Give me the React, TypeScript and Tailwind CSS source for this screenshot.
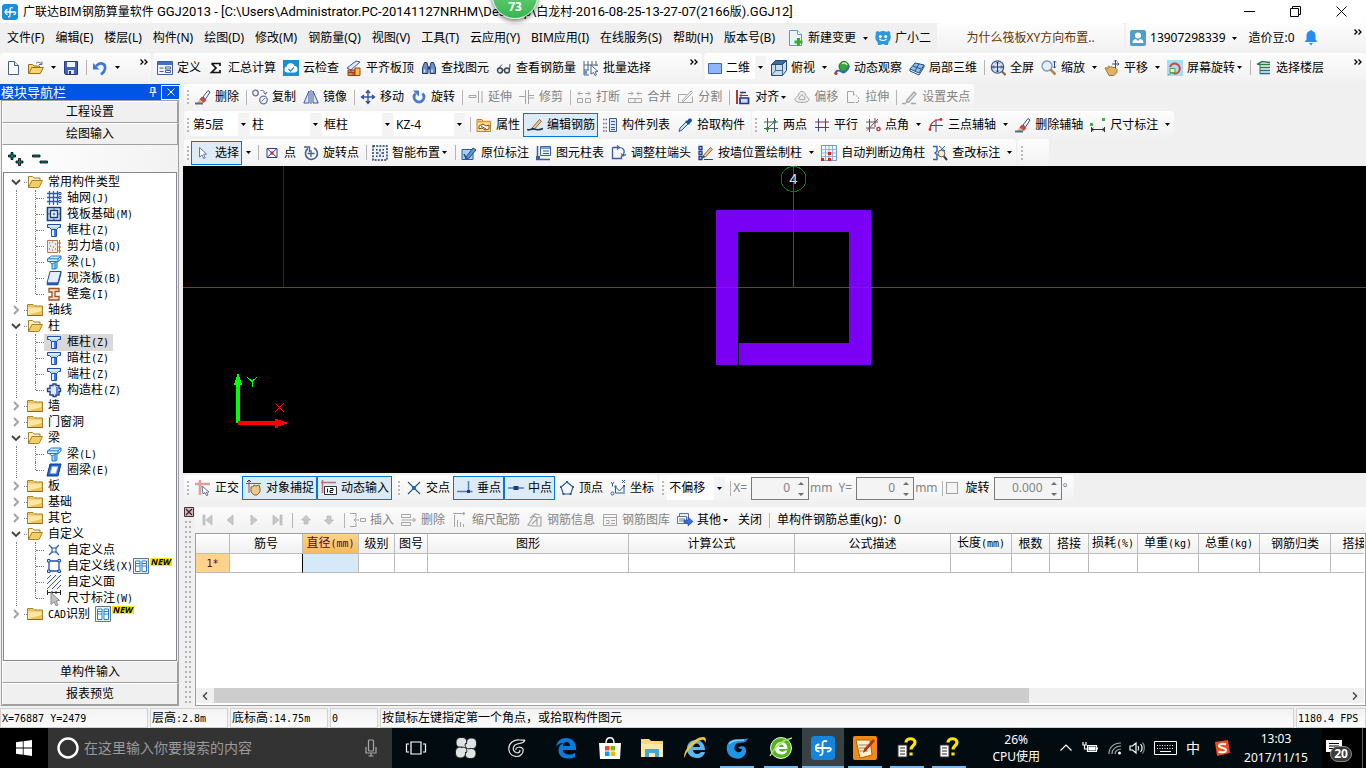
import { Fragment, type ReactNode } from "react";

const UI = "font-['Noto_Sans','Noto_Sans_CJK_SC',sans-serif]";

/* ---------- icons, all on a 16 x 16 grid ---------- */

const pencil = (c = "#8a5a2b") => (
  <>
    <path d="M5 11 12.500 2.500l2 1.800L7.500 12z" fill="#e9c79a" stroke={c} strokeWidth=".9" />
    <path d="m5 11-.8 2.400L7.500 12z" fill="#333" />
  </>
);

const brush = (
  <>
    <path d="M8 8 13 1.500 15 3l-4.500 7z" fill="#fff" stroke="#35507e" />
    <path d="m7 8 4 3-2 2.500L4.800 10.600z" fill="#d9463e" stroke="#8b2e2a" strokeWidth=".6" />
    <path d="M4.600 10.800 8.600 13.600 5 14.500l-3-1z" fill="#e8b96a" />
    <path d="M0 14.500h8" stroke="#4b6a9a" strokeWidth="2" />
  </>
);

const column = (
  <>
    <path d="M1.500 2.500h13v3h-2l-2 2h-5l-2-2h-2z" fill="#bcd6fb" stroke="#1d4fae" />
    <path d="M5.500 7.500h5v7h-5z" fill="#e8f1ff" stroke="#1d4fae" />
    <path d="M9 8v6" stroke="#3c78dd" strokeWidth="2" />
    <path d="M3 4h10" stroke="#fff" />
  </>
);

const beam = (
  <>
    <path d="m1.500 5 4-3h9.500v3l-3 2.500H1.500z" fill="#d5efff" stroke="#1b78c2" />
    <path d="M1.500 4.800h10.500L15 2M12 5v2.500" fill="none" stroke="#1b78c2" />
    <path d="m6 15 0-5 5-2.500V14l-2 1zM3 7.500 6 10" fill="#a9dafb" stroke="#1b78c2" />
    <path d="m9 9v6" stroke="#1b78c2" />
  </>
);

const ICONS: Record<string, ReactNode> = {
  newFile: <><path d="M3.500 1.500h6l4 4v9h-10z" fill="#fff" stroke="#42618f" /><path d="M9.500 1.500v4h4" fill="#d8e4f4" stroke="#42618f" /></>,
  open: <><path d="M.5 13.500v-9h4l1.500 1.500h5.500v2" fill="#f6d584" stroke="#9a6d16" /><path d="m.8 13.500 3-6h11.500l-3 6z" fill="#fbd46f" stroke="#9a6d16" /><path d="M8 3.500c2-2 4-1.500 5.500.5M14 1.500v3h-3" fill="none" stroke="#4a6a99" /></>,
  save: <><path d="M1.500 1.500h13v13h-12l-1-1z" fill="#3f5fc4" stroke="#24388c" /><path d="M4 2h8v5H4z" fill="#f2f5ff" /><path d="M5 10h6v4H5z" fill="#e4e8f6" /><path d="M6 11h2v3H6z" fill="#24388c" /></>,
  undo: <><path d="M4 6c5-5 10-2 9 3-.4 2.500-2 4-4 5.500" fill="none" stroke="#3c76d8" strokeWidth="2.600" /><path d="M1 3v6.500h6.500z" fill="#3c76d8" /></>,
  define: <><path d="M.5 1.500h15v13H.5z" fill="#eef4ff" stroke="#3d5f9e" /><path d="M1 2h14v3H1z" fill="#3f72c9" /><path d="M2.500 8h4M2.500 11.500h4" stroke="#3d5f9e" /><path d="M8.500 7h5v2h-5zM8.500 10.500h5v2h-5z" fill="#fff" stroke="#3d5f9e" /></>,
  sum: <path d="M3.500 3.500h8.500v2.500M3.500 3.500 8 8l-4.500 4.500H12V10" fill="none" stroke="#111" strokeWidth="1.700" />,
  cloud: <><rect width="16" height="16" fill="#1b8fd4" /><path d="M4 12.500a3 3 0 0 1-.3-5.900A4 4 0 0 1 11.500 6a3.300 3.300 0 0 1 .5 6.500z" fill="#fff" /><path d="m5.500 9 2 2 3.500-3.500" fill="none" stroke="#1b8fd4" strokeWidth="1.400" /></>,
  flush: <><path d="m1 8 9-7 4 1-9 8z" fill="#dfe9fb" stroke="#3a5ba0" /><path d="M2 10h7v5.500H2z" fill="#e78a3c" stroke="#9b3f1b" /><path d="M2 12.500h7M5 10v2.500M7 12.500v3" stroke="#9b3f1b" /><path d="M9 8h5v7.500H9z" fill="#f4bd4e" stroke="#9b3f1b" /></>,
  binoc: <><path d="M3.500 2.500h2.500l1 4.500v6.500H1.500V8zM12.500 2.500H10L9 7v6.500h5.500V8z" fill="#6b8fc6" stroke="#1f3a6b" /><path d="M7 6.500h2v3H7z" fill="#1f3a6b" /><path d="M3.500 9.500v3M11 9.500v3" stroke="#dbe8fb" strokeWidth="1.500" /></>,
  glasses: <><circle cx="4" cy="10.500" r="2.500" fill="#dce6f2" stroke="#3c4653" strokeWidth="1.400" /><circle cx="11" cy="10.500" r="2.500" fill="#dce6f2" stroke="#3c4653" strokeWidth="1.400" /><path d="M6.500 10h2M2 9l4-4.500M13.500 10 14 4" fill="none" stroke="#3c4653" /></>,
  batch: <><path d="M1 1v14h5M5 1v9M1 5h14M1 10h5M9 1v4M13 1v5" fill="none" stroke="#51647f" /><path d="M1 11h3v3H1z" fill="#5f8ede" /><path d="m8 5 7 6.500-3 .3 1.500 3-1.500.7-1.500-3L8 14z" fill="#fff" stroke="#51647f" /></>,
  rect: <path d="M1.500 3.500h13v10h-13z" fill="#8fb6fb" stroke="#3c65c0" />,
  cube: <><path d="m.5 4.500 4-4h11v10l-4 5H.5z" fill="#c6dcf0" stroke="#244d76" /><path d="m.5 4.500 4-4h11l-4 4z" fill="#376e9f" stroke="#244d76" /><path d="M11.500 4.500v11M4.500 4.500v6h7M4.500 10.500l-4 5" fill="none" stroke="#244d76" strokeWidth=".8" /></>,
  orbit: <><circle cx="10" cy="6.500" r="5" fill="#36a53f" stroke="#186b2a" /><path d="M8 4c2-2 4-1 5 1" stroke="#d8f5b0" fill="none" strokeWidth="1.500" /><path d="M1 14c1-4 4-4 7-2s5-2 7-6" fill="none" stroke="#2a6fb5" strokeWidth="1.800" /><circle cx="2" cy="13.500" r="1.600" fill="#c5372b" /></>,
  local3d: <><path d="m1 9 5-6 9 2-5 8z" fill="#92bde6" stroke="#1d5485" /><path d="m4 6 8 3M10 3.500 6 11M1 9v2l9 4 5-8V5" fill="none" stroke="#1d5485" /></>,
  full: <><circle cx="7.500" cy="7" r="6.200" fill="#dbe8fa" stroke="#3c5d92" strokeWidth="1.300" /><path d="M7.500 2v10M2.500 7h10M6 3.500 7.500 2 9 3.500M6 10.500 7.500 12 9 10.500M4 5.500 2.500 7 4 8.500M11 5.500 12.500 7 11 8.500" fill="none" stroke="#1c3668" /><path d="m12 11.500 3.500 3.500" stroke="#8b6138" strokeWidth="2" /></>,
  zoom: <><circle cx="6" cy="6" r="5" fill="#e4effc" stroke="#7b93b8" strokeWidth="1.300" /><path d="m9.500 9.500 5 5" stroke="#b0844c" strokeWidth="2.500" /><path d="M13.500 1v7M12 2.500 13.500 1 15 2.500M12 6.500 13.500 8 15 6.500" fill="none" stroke="#264a86" /></>,
  pan: <><path d="M1 8c1-1 2 0 3 1V6.500c1-1 2 0 2 1l1-1 2 1h2l2 2v3L10 15.500H5z" fill="#e0b368" stroke="#a2752f" /><path d="M11.500 0v8M8 4h7M10 1.500 11.500 0 13 1.500M13.500 2.500 15 4l-1.500 1.500" fill="none" stroke="#2d4c86" /></>,
  screenRot: <><rect width="16" height="16" fill="#a8dcf4" /><path d="M3 7a5 5 0 1 1 4 6.500" fill="none" stroke="#dd3f35" strokeWidth="2" /><path d="M3 8.500h5v4H3z" fill="#e9f2c8" stroke="#5f9e48" /><path d="M1 15c2-2 5-2 7-1" fill="none" stroke="#5f9e48" /></>,
  floors: <><path d="m1 4.500 5-3 8 1M3 4.500h11M4 7.500h10" stroke="#2d7d4b" strokeWidth="1.600" fill="none" /><path d="M4 10.500h10M4 13.500h10" stroke="#2b6496" strokeWidth="1.600" /><path d="M4 4v10" fill="none" stroke="#2d7d4b" /></>,
  brush,
  copy: <><circle cx="3.500" cy="4" r="2.800" fill="#eef2f9" stroke="#67789a" strokeWidth="1.300" /><circle cx="11.500" cy="11" r="3.800" fill="#eef2f9" stroke="#67789a" strokeWidth="1.300" /><path d="m9.500 12.500 3.500-3.500" fill="none" stroke="#67789a" /><path d="M8.500 1.500c3-.5 4.500 1 5 3.500M11.500 3.500l2 2 1.500-2.500" fill="none" stroke="#67789a" /></>,
  mirror: <><path d="M6 2v12H.8zM10 2v12h5.200z" fill="#dfe9fb" stroke="#34549a" /><path d="M8 1v14" stroke="#34549a" /></>,
  move: <path d="M8 2.500v11M2.500 8h11M6 4 8 1.500 10 4M6 12l2 2.500 2-2.500M4 6 1.500 8 4 10M12 6l2.500 2L12 10" fill="none" stroke="#34549a" strokeWidth="1.400" />,
  rotate: <><path d="M4.500 4.500a5 5 0 1 0 7 0" fill="none" stroke="#4c79d2" strokeWidth="2.800" /><path d="M2 1.500h6v6z" fill="#4c79d2" /></>,
  extend: <path d="M1 6.500h7v2H1zM10.500 2v12M14 2v12" fill="none" stroke="#a5a5a5" />,
  trim: <path d="M6.500 1v14M9.500 1v14M0 7.500h6M10 6.500h5M10 9h5" fill="none" stroke="#a5a5a5" />,
  split1: <path d="M1.500 9.500h5v4h-5zM9.500 9.500h5v4h-5zM7 4.500H2M4 2.500l-2 2 2 2M9 4.500h5M12 2.500l2 2-2 2" fill="none" stroke="#a5a5a5" />,
  merge: <path d="M1.500 9.500h13v4h-13zM8 9.500v4M1 4.500h5M4 2.500l2 2-2 2M15 4.500h-5M12 2.500l-2 2 2 2" fill="none" stroke="#a5a5a5" />,
  divide: <path d="M.5 5.500h8M.5 5.500v8h14v-6M4 12 13 2l1.500 1.500-9 9z" fill="none" stroke="#a5a5a5" />,
  align: <><path d="M2 1v14" stroke="#a3261d" strokeWidth="1.800" /><path d="M5 3.500h6M5 9h8.500v5.500H5z" fill="#cfdcf5" stroke="#1d3788" strokeWidth="1.700" /><path d="M13 6.500H5M7 4.500l-2 2 2 2" fill="none" stroke="#b3261d" /></>,
  offset: <><path d="M8 2.500c2.500 0 3 2 4 4s3 2 3 4-3 3-7 3-7-1-7-3 2-2 3-4 1.500-4 4-4z" fill="#ececec" stroke="#a5a5a5" /><path d="M8 6c1.500 0 3 3 3 4s-6 1-6 0 1.500-4 3-4z" fill="none" stroke="#a5a5a5" /></>,
  stretch: <><path d="M2.500 2.500h6v4M2.500 2.500v11h6" fill="none" stroke="#a5a5a5" /><path d="m8.500 4.500 5 4v5h-5" fill="none" stroke="#a5a5a5" strokeDasharray="2 1" /></>,
  grip: <path d="M5 11 12 3l2 1.800L7 13l-2.500.5zM0 14.500h4M9 14.500h5" fill="#e4e4e4" stroke="#a5a5a5" strokeWidth="1.300" />,
  props: <><path d="M1 2.500h5l1 2h7.500v10H1z" fill="#fbe1a0" stroke="#c48120" /><path d="M1 4.500h13" stroke="#e79a2c" strokeWidth="1.600" /><path d="M3 9 7 7l3 2 3-1v4l-4 1-3-2-3 1z" fill="#fff" stroke="#7a4a12" /><path d="m5 9 5 3" stroke="#7a4a12" /></>,
  editBar: <>{pencil()}<path d="M0 12.500c3 1.500 4-1.500 7-.5s5 1.500 9-.5" fill="none" stroke="#253247" strokeWidth="1.600" /></>,
  list: <><path d="M1 2.500h4M1 6.500h4M1 10.500h4M1 14h4" stroke="#5d7296" strokeWidth="1.600" strokeDasharray="1.500 1" /><path d="M7.500 1.500h7v13h-7z" fill="#dce7fb" stroke="#3e5c96" /><path d="M9 4.500h4M9 7.500h4M9 10.500h4M9 12.500h4" stroke="#3e5c96" /></>,
  dropper: <><path d="m2 14.500 1-3.500 6-6 2 2-6 6z" fill="#c2e1fb" stroke="#2b5d9e" /><path d="m8 4 4 4 1-2c2-1 2.500-3 1.500-4s-3-.5-4 1.500z" fill="#1b4f9c" /></>,
  twoPt: <><path d="M4.500 1v14M11.500 1v14M1 5h14M1 11.500h14" stroke="#4b5874" /><path d="m3 13 10-10" stroke="#2d8c35" /><circle cx="4.500" cy="11.500" r="1.600" fill="#2d8c35" /><circle cx="11.500" cy="5" r="1.600" fill="#2d8c35" /></>,
  parallel: <><path d="M4.500 1.500v13M11.500 1.500v13" stroke="#3a4a8c" /><path d="M1 5h14M1 10.500h14" stroke="#8c2f3a" /></>,
  angle: <><path d="M4.500 2v13M10 1v9M1 5h12M1 11h9" stroke="#4b5874" /><path d="M2 13.500 13 2" stroke="#c52f2f" /><circle cx="13.500" cy="12" r="1.600" fill="none" stroke="#c52f2f" strokeWidth="1.400" /></>,
  threePt: <><path d="M8 2v13M2 8.500h13" stroke="#3a4a8c" /><path d="M2 12c0-5 3-9 11-9.500" fill="none" stroke="#c52f2f" strokeWidth="1.200" /><circle cx="2" cy="12.500" r="1.400" fill="#c52f2f" /><circle cx="13" cy="2.500" r="1.400" fill="#c52f2f" /></>,
  dim: <><path d="M1.500 10v5M14.500 10v5M1.500 12.500h13M3.500 11l-2 1.500 2 1.500M12.500 11l2 1.500-2 1.500" fill="none" stroke="#333" /><path d="M0 6h3v3H0zM12 1h3v3h-3z" fill="#3fae49" /></>,
  cursor: <path d="m4.500 2.500 7 6.500-3 .2 1.700 3.600-1.500.7L7 10l-2.500 2z" fill="#fff" stroke="#62779c" />,
  point: <><path d="M3 3.500h10v9H3z" fill="#fff" stroke="#2c3f94" /><path d="m3 3.500 10 9M13 3.500l-10 9" stroke="#2c3f94" /><circle cx="8" cy="8" r="1.700" fill="#c52f2f" /></>,
  rotPt: <><path d="M5 3.500a6 6 0 1 0 6-.5" fill="none" stroke="#45618f" strokeWidth="1.600" /><path d="M1 2h5.500v5M8 5v7M4.500 8.500h7" fill="none" stroke="#45618f" strokeWidth="1.300" /></>,
  smart: <><path d="M1 1h14v14H1z" fill="#eef3fc" stroke="#28385c" strokeWidth="1.500" strokeDasharray="2 1.200" /><path d="M8 4v2.500M8 9.500V12M4 8h2.500M9.500 8H12" stroke="#28385c" strokeWidth="1.400" /><path d="M4 4h1.500v1.500H4zM10.500 4H12v1.500h-1.500zM4 10.500h1.500V12H4zM10.500 10.500H12V12h-1.500z" fill="#28385c" /></>,
  origLabel: <><path d="M1 4.500h11v10H1z" fill="#a7cdf3" stroke="#2d5e9c" /><path d="m5 12 7-9 3 2-7 8-3.500 1z" fill="#5b96dc" stroke="#1f4a86" /><path d="m3 9 2 4" stroke="#1f4a86" strokeWidth="1.500" /></>,
  colTable: <><path d="M1.500 1v11M0 14.500h14" stroke="#3d5f9e" strokeWidth="1.500" /><path d="M4.500 1.500h10v9h-10z" fill="#eef4ff" stroke="#3d5f9e" /><path d="M5 3h9" stroke="#7da3e8" strokeWidth="2" /><path d="M7 6h6M7 8.500h6" stroke="#3d5f9e" /><path d="M0 11h4v4H0z" fill="#3d5f9e" /></>,
  adjust: <><path d="M1.500 2.500H7M1.500 2.500v11h9v-3" fill="none" stroke="#3c5a9c" strokeWidth="1.300" /><path d="M8 2.500c5 0 6.500 3.500 4 8M6 4.500l2.500-2L6 .5M10 8.500l2 2.500 3-1.500" fill="none" stroke="#3c5a9c" strokeWidth="1.200" /></>,
  wallCol: <><path d="M1 1.500h3v3H1zM1 6.500h3v3H1zM1 11.500h3v3H1z" fill="#c3d7f7" stroke="#263f86" strokeWidth="1.300" />{pencil()}<path d="M6 14.500h9" stroke="#263f86" /></>,
  autoCorner: <><path d="M.5.500h15v15H.5z" fill="#f4f8ff" stroke="#6d95d4" /><path d="M4.500.500v15M8 .5v15M11.500.500v15M.5 4.500h15M.5 8h15M.5 11.500h15" stroke="#8fb0e4" /><path d="M0 13h3v3H0zM7 13h3v3H7zM7 7h3v3H7z" fill="#d4261d" /></>,
  check: <><path d="M1 1.500h4v5l-2 1.500 2 1.500v5H1" fill="none" stroke="#2d62b4" strokeWidth="1.400" /><circle cx="9.500" cy="8.500" r="3.400" fill="#f6ecd2" stroke="#5a5a5a" /><path d="m12 11.500 3 3.500" stroke="#3b3b3b" strokeWidth="2" /><path d="m7 1 6 5M13 1 9 5" stroke="#2d62b4" /></>,
  ortho: <><path d="M0 4h15M5 0v15" stroke="#dba0a0" strokeWidth="2.600" /><path d="m7 6 7 6-2.600.3L13 15l-1.500.6-1.500-3L8 14z" fill="#fff" stroke="#5d7296" /></>,
  snap: <><path d="M0 3.500h15M3 0v13" stroke="#b04a4a" /><path d="M5 7c1-1 2 0 2 0l1-2 2 1 3-1 1 3v4l-3 3H8l-3-3z" fill="#ecc98a" stroke="#8d6325" /><path d="m1 2 2-2 2 2" fill="none" stroke="#28385c" /></>,
  dyn: <><path d="M0 2.500h15M1.500 0v13" stroke="#b97171" strokeWidth="1.500" /><path d="M3.500 6.500h12v8h-12z" fill="#fff" stroke="#333" /><path d="M6.500 8.500v4M9 8.500h3v2H9v2h3" fill="none" stroke="#111" /></>,
  cross: <><path d="m2 2 12 12M14 2 2 14" stroke="#2b4f86" strokeWidth="1.100" /><path d="M6 6h4v4H6z" fill="#2668b8" /></>,
  perp: <><path d="M0 11.500h15.500M11.500 1v11" stroke="#4b7ec2" strokeWidth="1.500" /><path d="M10 10h3v3h-3z" fill="#1a3c80" /></>,
  mid: <><path d="M0 8h16" stroke="#4b7ec2" strokeWidth="1.500" /><path d="M5.500 6h5v4h-5z" fill="#1a3c80" /></>,
  vertex: <><path d="M8 2 14 7l-2.300 7H4.300L2 7z" fill="none" stroke="#2b5d9e" strokeWidth="1.200" /><path d="M7 1h2v2H7zM1 6h2v2H1zM13 6h2v2h-2zM3.500 13h2v2h-2zM10.500 13h2v2h-2z" fill="#2b5d9e" /></>,
  coord: <><path d="M5.500 6v7H15M5.500 7l4 4 4.500-5v6M1 2l1.500 2L4 2M2.500 4v2.500M12 0l3 3M15 0l-3 3" fill="none" stroke="#2b5d9e" /><circle cx="2.500" cy="13.500" r="1.500" fill="none" stroke="#2b5d9e" /><path d="M4.500 5.500h2v2h-2zM13 5h2v2h-2z" fill="#2b5d9e" /></>,
  first: <path d="M3 3h2v10H3zM12 3v10L6 8z" fill="#c8c8c8" stroke="#b0b0b0" strokeWidth=".6" />,
  prev: <path d="M10 3v10L4 8z" fill="#c8c8c8" stroke="#b0b0b0" strokeWidth=".6" />,
  next: <path d="M5 3v10l6-5z" fill="#c8c8c8" stroke="#b0b0b0" strokeWidth=".6" />,
  last: <path d="M11 3h2v10h-2zM4 3v10l6-5z" fill="#c8c8c8" stroke="#b0b0b0" strokeWidth=".6" />,
  up: <path d="m8 3.500 4.500 4.500h-2.500v4H6V8H3.500z" fill="#c8c8c8" stroke="#ababab" strokeWidth=".6" />,
  down: <path d="M8 12.500 3.500 8H6V4h4v4h2.500z" fill="#c8c8c8" stroke="#ababab" strokeWidth=".6" />,
  insert: <path d="M0 1.500h6v4M0 14.500h6v-4M10.500 6.500h5v3h-5zM9 8H4M6 6 4 8l2 2" fill="none" stroke="#a5a5a5" />,
  remove: <path d="M.5 2.500h9v3h-9zM.5 10.500h9v3h-9zM.5 8h14M12 6l2.500 2L12 10" fill="none" stroke="#a5a5a5" />,
  scale: <path d="M2.500 15V3M5.500 15V8M8.500 15v-5M11.500 15v-3M1 1.500h12M11 0l2 1.500L11 3" fill="none" stroke="#a5a5a5" />,
  info: <path d="M1 13 7 4l3 2 4-1v9H6zM3 6l5-4 5 1M5 12l5-5v6" fill="none" stroke="#a5a5a5" strokeWidth="1.200" />,
  lib: <path d="M1.500 2.500h13v11h-13zM1.500 5.500h13M4 8.500h3v3H4M9 8.500h4M9 11.500h4" fill="none" stroke="#a5a5a5" />,
  other: <><path d="M2.500 1.500h9v10h-9z" fill="#e8eefb" stroke="#5d7296" /><path d="M.5 4.500h9v7h-9z" fill="#fff" stroke="#5d7296" /><path d="M2 7h6M2 9h6" stroke="#5d7296" /><path d="M7 8h4V5l5 4.500-5 4.500v-3H7z" fill="#3c6fd8" stroke="#1d3f94" strokeWidth=".6" /></>,
  newChange: <><path d="M1.500.5h8l4 4v11h-12z" fill="#e8f6fd" stroke="#5b9cc4" /><path d="M9.500.5v4h4" fill="#fff" stroke="#5b9cc4" /><path d="M9 8h3v2.500h2.500v3H12V16H9v-2.500H6.500v-3H9z" fill="#45a82b" /></>,
  mascot: <><path d="M1 4a1.800 1.800 0 0 1 3-2c2.500-1.300 5.500-1.300 8 0a1.800 1.800 0 0 1 3 2c1.300 3 .8 6-1.500 8L13 15h-2.500L8 14l-2.500 1H3l-.5-3C.2 10-.3 7 1 4z" fill="#2d98dd" /><circle cx="5.300" cy="6.500" r="1.500" fill="#fff" /><circle cx="10.700" cy="6.500" r="1.500" fill="#fff" /><path d="M4.500 9c2 2 5 2 7 0" stroke="#fff" fill="none" strokeWidth="1.200" /></>,
  user: <><rect width="16" height="16" rx="2" fill="#4d9fce" /><circle cx="8" cy="5.500" r="3" fill="#fff" /><path d="M2.500 13c0-3 2-4 3.500-4l2 2 2-2c1.500 0 3.500 1 3.500 4z" fill="#fff" /></>,
  bell: <path d="M8 0a1 1 0 0 1 1 1c3 .5 3.500 3 3.500 5v3.500l2 2.500h-13l2-2.500V6c0-2 .5-4.500 3.500-5a1 1 0 0 1 1-1zM6 13h4l-2 2.500z" fill="#2a8bf2" />,
  app: <><rect width="16" height="16" rx="3" fill="#1b8ddf" /><path d="M11 4c-2-1-3 0-3 1.500V11c0 1.500-.5 2-2 2M2.500 8h11M5.500 5.500C3 5.500 2.500 10.500 5.500 10.500M11.500 10.500c2 0 2.500-1 2-2.500" fill="none" stroke="#fff" strokeWidth="1.300" /></>,
  folder: <><path d="M.5 13.500v-11h5.500l1.500 1.500h8v9.500z" fill="#eec25a" stroke="#a5822c" /><path d="M1 5.500h13.500V9L1 13z" fill="#fbe6a0" /><path d="M.5 13.500h15" stroke="#8a6a1c" /></>,
  folderOpen: <><path d="M1.500 13.500v-11h4l1.500 1.500h6v3" fill="#fdf0be" stroke="#a5822c" /><path d="m1.500 13.500 3.500-7h10.500l-3.500 7z" fill="#f5cd62" stroke="#a5822c" /></>,
  axisNet: <><path d="M3.500 1v14M7.500 1v14M11.500 1v14M1 3.500h12M1 7.500h12M1 11.500h12" stroke="#2c5bb8" strokeWidth="1.300" /><path d="M13 2.500h2v2h-2zM13 6.500h2v2h-2zM13 10.500h2v2h-2z" fill="#fff" stroke="#2c5bb8" /></>,
  raft: <><path d="M1.500 1.500h13v13h-13z" fill="#d6e8fb" stroke="#163f7d" strokeWidth="1.600" /><path d="M4.500 4.500h7v7h-7z" fill="#fff" stroke="#163f7d" strokeWidth="1.400" /><path d="M2 8h2.500M11.500 8H14M8 2v2.500M8 11.500V14M6.500 8h3M8 6.500v3" stroke="#2d62a8" /></>,
  column,
  beam,
  wall: <><path d="M1.500 2.500h10v12h-10z" fill="#ececec" stroke="#c07643" /><path d="M3 5h1M6 4h1M9 6h1M4 8h1M7 9h1M3 11h1M6 12h1M9 11h1" stroke="#555" /><path d="M13.500 2v13M12 5h3M12 9h3M12 13h3" stroke="#d8661a" /></>,
  slab: <><path d="M4 1.500h11L12 13H1z" fill="#e2efff" stroke="#1d4fae" /><path d="M1 13v2h11l3-11V1.500L12 13z" fill="#1d5fce" stroke="#1d4fae" strokeWidth=".6" /></>,
  niche: <path d="M3 2.500h10v3H9v5h4v3.500H3v-3h3v-5H3z" fill="#fbe2c8" stroke="#a2511f" strokeWidth="1.300" />,
  structCol: <><path d="M4 3.500h3V2h3v1.500h3v3h1.500v3H13v3.500h-3v1.500H7V13H4V9.500H1.500v-3H4z" fill="#dbe8fd" stroke="#20408c" strokeWidth="1.400" /><path d="M11 5v7" stroke="#5d86d6" strokeWidth="2" /></>,
  ringBeam: <><path d="M4 2h11l-3 12H1z" fill="#1d5fce" stroke="#163f8e" /><path d="M6 4.500h6L10 11.500H4z" fill="#fff" stroke="#8db4f0" /></>,
  customPt: <><path d="m3 3 4 4M13 3 9 7M3 13l4-4M13 13 9 9" stroke="#2c5bb8" strokeWidth="1.200" /><path d="M6 6h4v4H6z" fill="#fff" stroke="#1d4fae" /></>,
  customLine: <><path d="M3 3h10v10H3z" fill="#fff" stroke="#1d4fae" strokeWidth="1.300" /><path d="M1.500 1.500h2.500v2.500H1.500zM12 1.500h2.500v2.500H12zM1.500 12h2.500v2.500H1.500zM12 12h2.500v2.500H12z" fill="#cfe0fb" stroke="#1d4fae" /></>,
  customFace: <path d="m1 5 4-4M1 10l9-9M1 15 15 1M6 15l9-9M11 15l4-4" stroke="#2c5bb8" fill="none" />,
  dimCursor: <><path d="M1.500 0v5M14.500 0v5M1.500 2.500h13M6 1v3M10 1v3" stroke="#222" /><path d="m5 2.500 8.500 8-3.500.5 2 4-2 .8-1.800-4L5 14.500z" fill="#c4c4c4" stroke="#8a8a8a" /></>,
  book: <><path d="M.5.5h15v15H.5z" fill="#e4f3fe" stroke="#63768d" /><path d="M2.500 3h4.500v10.500H2.500zM9 3h4.500v10.500H9z" fill="#fff" stroke="#1d83d8" /><path d="M3 5.500h4M3 8h4M9 5.500h4M9 8h4" stroke="#1d83d8" /></>,
};

function Icon({ name, className = "size-4" }: { name: string; className?: string }) {
  return (
    <svg viewBox="0 0 16 16" className={`shrink-0 ${className}`} aria-hidden="true">
      {ICONS[name]}
    </svg>
  );
}

/* ---------- toolbar parts ---------- */

function Arrow() {
  return (
    <svg viewBox="0 0 5 3" className="h-[3px] w-[5px] shrink-0" aria-hidden="true">
      <path d="M0 0h5L2.500 3z" fill="#000" />
    </svg>
  );
}

function More() {
  return (
    <svg viewBox="0 0 8 6" className="mt-[6px] h-[6px] w-2 shrink-0 self-start" aria-hidden="true">
      <path d="m.5.500 2.500 2.500L.5 5.500M4.500.500 7 3 4.500 5.500" fill="none" stroke="#000" strokeWidth="1.300" />
    </svg>
  );
}

type ToolProps = {
  icon?: string;
  label?: string;
  title?: string;
  arrow?: "near" | "far";
  off?: boolean;
  on?: boolean;
};

function Tool({ icon, label, title, arrow, off, on }: ToolProps) {
  return (
    <>
      <button
        type="button"
        disabled={off}
        aria-label={label ?? title}
        aria-pressed={on}
        className={`flex h-6 shrink-0 items-center gap-1 border pr-[2px] pl-[3px] whitespace-nowrap ${
          on ? "border-[#0078d7] bg-[#dcebf5]" : "border-transparent"
        } ${off ? "text-[#848484]" : "text-black"}`}
      >
        {icon && <Icon name={icon} />}
        {label}
        {arrow === "near" && <span className="-ml-[2px] flex w-[6px]"><Arrow /></span>}
      </button>
      {arrow === "far" && (
        <button type="button" aria-label={`${label ?? title}选项`} className="flex h-6 w-3 shrink-0 items-center justify-center">
          <Arrow />
        </button>
      )}
    </>
  );
}

const Sep = () => <span className="mr-px ml-1 h-[15px] w-px shrink-0 bg-[#b4b4b4]" />;

const Grip = () => (
  <span className="flex w-[7px] shrink-0 flex-col items-center gap-[2px]">
    {[0, 1, 2, 3].map((i) => <i key={i} className="h-[2px] w-[2px] bg-[#b8b8b8]" />)}
  </span>
);

function Panel({ children, className = "" }: { children?: ReactNode; className?: string }) {
  return (
    <div className={`flex h-full shrink-0 items-center rounded-[3px] bg-linear-to-b from-[#fdfdfd] to-[#f1f1f1] ${className}`}>
      {children}
    </div>
  );
}

function Combo({ value, name, className, icon }: { value: string; name: string; className: string; icon?: string }) {
  return (
    <label className={`mr-px flex h-[23px] shrink-0 items-center bg-white pl-[2px] ${className}`}>
      {icon && <Icon name={icon} className="mr-[3px] size-4" />}
      <select aria-label={name} className="min-w-0 flex-1 appearance-none bg-transparent outline-none">
        <option>{value}</option>
      </select>
      <span className="flex h-full w-[11px] shrink-0 items-center justify-center bg-[#f3f3f3]"><Arrow /></span>
    </label>
  );
}

function Spin({ value, name, className }: { value: string; name: string; className: string }) {
  return (
    <span className={`flex h-[23px] shrink-0 items-center border border-[#7a7a7a] bg-[#f4f4f4] ${className}`}>
      <input aria-label={name} defaultValue={value} className="w-0 min-w-0 flex-1 bg-transparent text-right text-[#848484] outline-none" />
      <svg viewBox="0 0 14 21" className="ml-1 h-[21px] w-[14px] shrink-0" aria-hidden="true">
        <path d="M4 7h6L7 4zM4 15h6l-3 3z" fill="#6d6d6d" />
      </svg>
    </span>
  );
}

/* Bitmap-song style text: half-width Latin beside full-width Han characters. */
function Song({ children }: { children: string }) {
  return (
    <>
      {children.split(/([\x21-\x7e]+(?: +[\x21-\x7e]+)*)/).map((part, i) => (
        <Fragment key={i}>
          {i % 2 ? <span className="font-['DejaVu_Sans_Mono',monospace] text-[10px]">{part}</span> : part}
        </Fragment>
      ))}
    </>
  );
}

/* ---------- module tree ---------- */

type Leaf = { label: string; icon: string; selected?: boolean; fresh?: boolean };
type Branch = { label: string; fresh?: boolean; items?: Leaf[] };

const TREE: Branch[] = [
  {
    label: "常用构件类型",
    items: [
      { label: "轴网(J)", icon: "axisNet" },
      { label: "筏板基础(M)", icon: "raft" },
      { label: "框柱(Z)", icon: "column" },
      { label: "剪力墙(Q)", icon: "wall" },
      { label: "梁(L)", icon: "beam" },
      { label: "现浇板(B)", icon: "slab" },
      { label: "壁龛(I)", icon: "niche" },
    ],
  },
  { label: "轴线" },
  {
    label: "柱",
    items: [
      { label: "框柱(Z)", icon: "column", selected: true },
      { label: "暗柱(Z)", icon: "column" },
      { label: "端柱(Z)", icon: "column" },
      { label: "构造柱(Z)", icon: "structCol" },
    ],
  },
  { label: "墙" },
  { label: "门窗洞" },
  { label: "梁", items: [{ label: "梁(L)", icon: "beam" }, { label: "圈梁(E)", icon: "ringBeam" }] },
  { label: "板" },
  { label: "基础" },
  { label: "其它" },
  {
    label: "自定义",
    items: [
      { label: "自定义点", icon: "customPt" },
      { label: "自定义线(X)", icon: "customLine", fresh: true },
      { label: "自定义面", icon: "customFace" },
      { label: "尺寸标注(W)", icon: "dimCursor" },
    ],
  },
  { label: "CAD识别", fresh: true },
];

const Fresh = () => (
  <span className="flex items-center">
    <Icon name="book" />
    <span className="mb-2 ml-px bg-[#ffe600] px-px text-[9px] leading-[8px] font-bold text-black italic">NEW</span>
  </span>
);

function Tree() {
  return (
    <ul className="min-h-0 flex-1 overflow-hidden border border-[#828790] bg-white pt-px">
      {TREE.map((b) => (
        <li key={b.label}>
          <div className="flex h-4 items-center">
            <span className="flex w-[23px] shrink-0 items-center pl-[7px]">
              <svg viewBox="0 0 10 10" className="size-[10px]" aria-hidden="true">
                {b.items
                  ? <path d="m1 3 4 4 4-4" fill="none" stroke="#404040" strokeWidth="1.800" />
                  : <path d="m3 1 4 4-4 4" fill="none" stroke="#a0a0a0" strokeWidth="1.800" />}
              </svg>
              <span className="ml-[3px] w-[3px] border-t border-dotted border-[#808080]" />
            </span>
            <Icon name={b.items ? "folderOpen" : "folder"} />
            <span className="mr-[5px] ml-[5px] whitespace-nowrap"><Song>{b.label}</Song></span>
            {b.fresh && <Fresh />}
          </div>
          {b.items && (
            <ul className="ml-3 border-l border-dotted border-[#808080] pl-[18px]">
              {b.items.map((leaf, i) => (
                <li key={leaf.label} className="flex h-4 items-center">
                  <span className={`w-px shrink-0 self-start border-l border-dotted border-[#808080] ${i === b.items!.length - 1 ? "h-2" : "h-4"}`} />
                  <span className="w-2 shrink-0 border-t border-dotted border-[#808080]" />
                  <span className={`flex items-center pr-1 pl-[2px] ${leaf.selected ? "bg-[#d9d9d9]" : ""}`}>
                    <Icon name={leaf.icon} />
                    <span className="ml-[5px] whitespace-nowrap"><Song>{leaf.label}</Song></span>
                  </span>
                  {leaf.fresh && <span className="-ml-1"><Fresh /></span>}
                </li>
              ))}
            </ul>
          )}
        </li>
      ))}
    </ul>
  );
}

function SideButton({ children }: { children: ReactNode }) {
  return (
    <button type="button" className="h-[22px] w-full shrink-0 border border-t-white border-r-[#a0a0a0] border-b-[#a0a0a0] border-l-white bg-[#f0f0f0]">
      {children}
    </button>
  );
}

function Sidebar() {
  return (
    <aside className="flex w-[180px] shrink-0 flex-col">
      <div className="flex h-4 shrink-0 items-center bg-[#0055e5] pl-px text-[13px] text-white">
        <span className="flex-1">模块导航栏</span>
        <button type="button" aria-label="固定" className="mr-1">
          <svg viewBox="0 0 8 10" className="h-[10px] w-2"><path d="M2 .5h4v5H2zM5 .5v5M.5 5.500h7M4 6v4" fill="none" stroke="#fff" /></svg>
        </button>
        <button type="button" aria-label="关闭" className="flex h-[15px] w-[19px] items-center justify-center border border-white">
          <svg viewBox="0 0 8 8" className="size-2"><path d="m.5.500 7 7M7.500.500l-7 7" stroke="#fff" /></svg>
        </button>
      </div>
      <div className="mx-px flex min-h-0 flex-1 flex-col border border-[#a0a0a0]">
        <SideButton>工程设置</SideButton>
        <SideButton>绘图输入</SideButton>
        <div className="flex h-[27px] shrink-0 items-center gap-2 bg-linear-to-r from-white to-[#f2f2f2] pl-[6px]">
          <button type="button" aria-label="全部展开">
            <svg viewBox="0 0 16 14" className="h-[14px] w-4"><path d="M3 .5h2V3h2.500v2H5v2.500H3V5H.5V3H3zM10.500 6.500h2V9H15v2h-2.500v2.500h-2V11H8V9h2.500z" fill="#008080" stroke="#000" strokeWidth=".8" /></svg>
          </button>
          <button type="button" aria-label="全部折叠">
            <svg viewBox="0 0 16 14" className="h-[14px] w-4"><path d="M.5 3H8v2H.5zM8 9h7.500v2H8z" fill="#008080" stroke="#000" strokeWidth=".8" /></svg>
          </button>
        </div>
        <div className="flex min-h-0 flex-1 flex-col px-px"><Tree /></div>
        <SideButton>单构件输入</SideButton>
        <SideButton>报表预览</SideButton>
      </div>
    </aside>
  );
}

/* ---------- drawing area ---------- */

function Canvas() {
  return (
    <div className="min-h-0 flex-1 bg-black">
      <svg className="h-full w-full" role="img" aria-label="绘图区" shapeRendering="crispEdges">
        <path d="M533 44h155v155H533zM555 66v111h111V66z" fill="#7a00f5" fillRule="evenodd" />
        <path d="M555 177h1v22h-1z" fill="#000" />
        <path d="M100.500 0v121" stroke="#800000" />
        <line x1="0" x2="100%" y1="121.500" y2="121.500" stroke="#f00" />
        <path d="M610.500 0v121" stroke="#f00" />
        <circle cx="610.500" cy="13" r="12.500" fill="none" stroke="#008000" />
        <text x="610.500" y="18" textAnchor="middle" fill="#d8d8d8" fontSize="15" fontFamily="Liberation Sans">4</text>
        <path d="M53 257v-38h-2v-2h1v-3h1v-3h1v-3h2v3h1v3h1v3h1v2h-2v38z" fill="#0f0" />
        <path d="M55 255h37v-2h3v1h3v1h3v1h3v2h-3v1h-3v1h-3v2h-3v-3H55z" fill="#f00" />
        <path d="m64 211 5 4.500 5-4.500M69 215.500v5" fill="none" stroke="#0f0" />
        <path d="m92 237 9 9M101 237l-9 9" stroke="#f00" />
      </svg>
    </div>
  );
}

/* ---------- bar table ---------- */

const COLS: [string, string][] = [
  ["", "w-[34px]"],
  ["筋号", "w-[73px]"],
  ["直径(mm)", "w-[56px]"],
  ["级别", "w-[36px]"],
  ["图号", "w-[33px]"],
  ["图形", "w-[201px]"],
  ["计算公式", "w-[166px]"],
  ["公式描述", "w-[156px]"],
  ["长度(mm)", "w-[61px]"],
  ["根数", "w-[38px]"],
  ["搭接", "w-[39px]"],
  ["损耗(%)", "w-[49px]"],
  ["单重(kg)", "w-[61px]"],
  ["总重(kg)", "w-[61px]"],
  ["钢筋归类", "w-[71px]"],
  ["搭接形式", "w-[72px]"],
];

function BarGrid() {
  return (
    <div className="flex min-h-0 flex-1 flex-col border border-[#a0a0a0] bg-white pr-px">
      <div className="min-h-0 flex-1 overflow-hidden">
        <table className="w-[1207px] table-fixed border-separate border-spacing-0">
          <thead>
            <tr>
              {COLS.map(([label, w], i) => (
                <th
                  key={i}
                  scope="col"
                  className={`h-5 overflow-hidden border-r border-b border-[#bcbcbc] p-0 font-normal whitespace-nowrap ${w} ${
                    i === 2 ? "bg-linear-to-b from-[#fbd48a] to-[#f5bb5c] text-[#5a004b]" : "bg-linear-to-b from-white to-[#f0f0f0]"
                  }`}
                >
                  <Song>{label}</Song>
                </th>
              ))}
            </tr>
          </thead>
          <tbody>
            <tr>
              {COLS.map((_, i) => (
                <td
                  key={i}
                  className={`h-[19px] border-r border-b p-0 text-center ${
                    i === 0 ? "border-[#bcbcbc] bg-[#ffd38c] text-[#5a004b]" : i === 1 ? "border-r-black border-b-[#bcbcbc]" : i === 2 ? "border-[#bcbcbc] bg-[#d6e9f8]" : "border-[#bcbcbc]"
                  }`}
                >
                  {i === 0 && <Song>1*</Song>}
                </td>
              ))}
            </tr>
          </tbody>
        </table>
      </div>
      <div className="mb-[2px] flex h-[15px] shrink-0 items-center bg-[#f0f0f0]">
        <button type="button" aria-label="向左滚动" className="flex h-full w-[18px] items-center justify-center">
          <svg viewBox="0 0 6 8" className="h-2 w-[6px]"><path d="M5 .5 1.500 4 5 7.500" fill="none" stroke="#505050" strokeWidth="1.600" /></svg>
        </button>
        <div className="h-full flex-1"><div className="h-full w-[72%] bg-[#cdcdcd]" /></div>
        <button type="button" aria-label="向右滚动" className="flex h-full w-[18px] items-center justify-center">
          <svg viewBox="0 0 6 8" className="h-2 w-[6px]"><path d="M1 .5 4.500 4 1 7.500" fill="none" stroke="#505050" strokeWidth="1.600" /></svg>
        </button>
      </div>
    </div>
  );
}

/* ---------- taskbar ---------- */

const helpArt = (
  <>
    <path d="M3 9h9v12H3z" fill="#fff" stroke="#333" />
    <path d="M5 12h5M5 15h5M5 18h5" stroke="#222" />
    <path d="M11 6.500c0-5 9-5 9 0 0 3-4 3-4 7M16 16.500v3" fill="none" stroke="#ffe600" strokeWidth="3.200" />
  </>
);

const TASKS: { name: string; width: string; art: ReactNode; run?: boolean; active?: boolean }[] = [
  { name: "任务视图", width: "w-12", art: <path d="M7 6h10v12H7zM5 8H2.500v8H5M19 8h2.500v8H19" fill="none" stroke="#fff" strokeWidth="1.200" /> },
  { name: "风扇", width: "w-[51px]", art: <g fill="#dfe3e4" stroke="#050d10" strokeWidth=".9"><rect x="2" y="1.500" width="11" height="10" rx="4.500" /><rect x="12.500" y="2" width="10" height="11" rx="4.500" /><rect x="11" y="12.500" width="11" height="10" rx="4.500" /><rect x="1.500" y="11" width="10" height="11" rx="4.500" /><path d="M12 8c-3 0-4 2-4 4s2 4 4 4 4-2 4-4-2-4-4-4z" stroke="none" /><path d="M7 12c2-3 8 3 10 0M12 7c-3 2 3 8 0 10" fill="none" /></g> },
  { name: "浏览助手", width: "w-[49px]", art: <path d="M21 4c-5 1-8-2-13 2-5 4-4 12 2 14 6 2 10-3 9-7-2-3-8-2-7 1M21 4c-2 5-6 2-10 5-3 3-2 7 2 8 2 0 3-1 3-3" fill="none" stroke="#dfe3e4" strokeWidth="1.200" /> },
  { name: "Edge", width: "w-[51px]", art: <path d="M2 11C3 5 7 2 12 2c6 0 10 4 10 10v2H9c0 3 3 4.500 6 4.500 2.500 0 4.500-.7 6-1.500v4c-2 1-4.500 1.500-7 1.500C8 22.500 4.500 19 4.500 14c0-3 2-6 5-7C5.500 7 3 9 2 11zm7-1h7c0-2-1-4-3.500-4S9 8 9 10z" fill="#0c7bd8" /> },
  { name: "应用商店", width: "w-[37px]", art: <><path d="M1 7h22l-1 16H2z" fill="#fff" /><path d="M8 7c0-7 8-7 8 0" fill="none" stroke="#fff" strokeWidth="1.400" /><path d="M7 10h4.500v4.500H7z" fill="#f04e1f" /><path d="M12.500 10H17v4.500h-4.500z" fill="#7db900" /><path d="M7 15.500h4.500V20H7z" fill="#00a1ee" /><path d="M12.500 15.500H17V20h-4.500z" fill="#fdb800" /></> },
  { name: "文件资源管理器", width: "w-[47px]", art: <><path d="M1 3h8l2 2h12v16H1z" fill="#fbd978" /><path d="M1 8h22v13H1z" fill="#ffe9a6" /><path d="M5 21v-8h14v8h-4v-4H9v4z" fill="#3ea5dd" /></> },
  { name: "Internet Explorer", width: "w-[39px]", art: <><path d="M4 13C4 7 8 4 13 4s9 4 9 10H10c0 2 2 4 4 4s3-.8 4-2h4c-1 4-4 6-8 6-6 0-10-4-10-9zm6-2h7c0-2-2-3.500-3.500-3.500S10.500 9 10 11z" fill="#59b7f0" /><path d="M2 22C-2 18 10 1 20 1c4 0 3 4 2 6 0-3-1-4-4-3C11 6 1 18 2 22z" fill="#f8c32c" /></> },
  { name: "浏览器", width: "w-[46px]", run: true, art: <><path d="M23 2c-2 6-7 4-10 5-4 1-5 7-1 9 3 1 5-1 5-3l-4-1c3-3 9-2 8 4-1 5-6 8-12 6C1 20 0 10 4 6c5-5 13-1 19-4z" fill="#1f95e6" /><path d="M4 8c4-5 10-3 15-4" fill="none" stroke="#78cdfb" strokeWidth="1.500" /></> },
  { name: "安全浏览器", width: "w-[42px]", run: true, art: <><circle cx="12" cy="12" r="10.500" fill="#54b522" stroke="#e9f6df" /><path d="M6 12.500c0-4 3-6.500 6.500-6.500s6 2.500 6 7H10c0 2 1.500 2.700 3 2.700 1.200 0 2.200-.5 3-1.300h2.200c-.8 2.500-3 4-5.700 4-4 0-6.500-2.500-6.500-5.900zm4-1.500h4.700c0-1.500-1-2.500-2.300-2.500S10.200 9.500 10 11z" fill="#fff" /><path d="M1 20C6 10 14 4 23 2" stroke="#a6e26e" fill="none" strokeWidth="1.500" /></> },
  { name: "广联达钢筋算量", width: "w-[42px]", run: true, active: true, art: <><rect width="24" height="24" rx="4" fill="#1484dc" /><path d="M16 5.500c-3-1.500-4.500 0-4.500 2.500v8.500c0 2-1 3-3 2.500M4.500 12h15M8.500 8.500c-5 0-5 7 0 7M16 15.500c3.500 0 4.500-1.500 3.500-3.500" fill="none" stroke="#fff" strokeWidth="1.800" /></> },
  { name: "记事", width: "w-[42px]", run: true, art: <><rect width="24" height="24" rx="2" fill="#f18a13" /><path d="M3 4h14l2 15-12 3z" fill="#fff3cf" stroke="#b45a08" /><path d="M6 9h9M6 12h9M7 15h8" stroke="#9a7c50" /><path d="m10 17 1-4L20 3l2 2-9 10z" fill="#b5321e" /></> },
  { name: "帮助一", width: "w-[42px]", run: true, art: helpArt },
  { name: "帮助二", width: "w-[42px]", run: true, art: helpArt },
];

function Tray({ name, children, className = "w-4" }: { name: string; children: ReactNode; className?: string }) {
  return (
    <button type="button" aria-label={name} className={`shrink-0 ${className}`}>
      <svg viewBox="0 0 16 16" className="size-4" fill="none" stroke="#fff" strokeWidth="1.200">{children}</svg>
    </button>
  );
}

function Taskbar() {
  return (
    <footer className="flex h-10 shrink-0 items-center bg-[#020c10] text-white">
      <button type="button" aria-label="开始" className="flex h-full w-12 shrink-0 items-center justify-center bg-black">
        <svg viewBox="0 0 16 16" className="size-4" fill="#fff"><path d="m0 2.300 6.800-1V7.600H0zM7.600 1.200 16 0v7.600H7.600zM0 8.400h6.800v6.300l-6.800-1zM7.600 8.400H16V16l-8.400-1.200z" /></svg>
      </button>
      <label className="flex h-full w-[344px] shrink-0 items-center bg-[#333] pr-[13px] pl-2">
        <svg viewBox="0 0 24 24" className="mr-1 size-6 shrink-0"><circle cx="12" cy="12" r="9.500" fill="none" stroke="#fff" strokeWidth="2.400" /></svg>
        <input aria-label="搜索" placeholder="在这里输入你要搜索的内容" className="min-w-0 flex-1 bg-transparent text-[14px] outline-none placeholder:text-[#9a9a9a]" />
        <svg viewBox="0 0 16 20" className="h-5 w-4 shrink-0" fill="none" stroke="#a8a8a8" strokeWidth="1.200"><rect x="5.500" y="2" width="5" height="11" rx="1" /><path d="M3 9v6h10V9M8 15v3M5.500 18h5" /></svg>
      </label>
      {TASKS.map((t) => (
        <button key={t.name} type="button" aria-label={t.name} className={`flex h-full shrink-0 flex-col items-center ${t.width} ${t.active ? "bg-[#384245]" : ""}`}>
          <svg viewBox="0 0 24 24" className="mt-2 size-6 shrink-0">{t.art}</svg>
          {t.run && <span className={`mt-auto h-[2px] bg-[#76b9ed] ${t.active ? "w-full" : "w-[34px]"}`} />}
        </button>
      ))}
      <div className="ml-auto flex h-full shrink-0 items-center">
        <div className="mr-[18px] text-center leading-[17px]">26%<br />CPU使用</div>
        <Tray name="显示隐藏的图标" className="mr-2 w-4"><path d="m2.500 10.500 5.500-5.500 5.500 5.500" /></Tray>
        <Tray name="电池" className="mr-[9px] w-4"><path d="M5.500 5.500h9v6h-9zM15.500 7.500v2M1 2v3h3V2M2.500 5v4h3" /><path d="M7 7h6v3H7z" fill="#fff" /></Tray>
        <Tray name="网络" className="mr-[6px] w-4"><path d="M2 14C2 7 7 3 14 3M5 14c0-5 4-8 9-8M8 14c0-3 3-5 6-5" stroke="#aaa" /><circle cx="12.500" cy="13" r="1.500" fill="#fff" stroke="none" /></Tray>
        <Tray name="音量" className="mr-[9px] w-4"><path d="M1 6h2.500L7 3v10l-3.500-3H1zM9 6c1 1.500 1 3 0 4.500M11.500 4c2 2.500 2 5.500 0 8" /><path d="M13.500 2.500c2.500 3 2.500 8 0 11" stroke="#888" /></Tray>
        <button type="button" aria-label="触摸键盘" className="mr-[9px]">
          <svg viewBox="0 0 23 14" className="h-[14px] w-[23px]" fill="none" stroke="#fff"><path d="M.5.500h22v13H.5zM6 10.500h11" /><path d="M3 4.500h17M3 7.500h17" strokeDasharray="1 1.500" /></svg>
        </button>
        <span className="mr-[14px] text-[14px]">中</span>
        <svg viewBox="0 0 16 16" className="mr-[12px] size-4" aria-label="搜狗输入法"><path d="M1 2 14 0l2 13L3 16z" fill="#ee4a1b" /><path d="M12 4.500C9 3 5 4 5 6s7 1.500 7 4-4 3-7.500 1.500" fill="none" stroke="#fff" strokeWidth="2" /></svg>
        <time className="w-[68px] text-center leading-[19px]">13:03<br />2017/11/15</time>
        <button type="button" aria-label="通知" className="relative ml-[12px] h-full w-[40px] bg-black pl-1">
          <svg viewBox="0 0 16 16" className="size-4"><path d="M0 0h16v12H8l-3 3v-3H0z" fill="#fff" /><path d="M3 3.500h10M3 6h10M3 8.500h7" stroke="#000" /></svg>
          <span className="absolute top-[18px] left-2 flex h-4 w-[22px] items-center justify-center rounded-full border border-[#8a8a8a] bg-[#3a3a3a] font-bold">20</span>
        </button>
        <span className="h-full w-1 border-l border-[#5a5a5a] bg-black" />
      </div>
    </footer>
  );
}

/* ---------- page ---------- */

const MENUS = ["文件(F)", "编辑(E)", "楼层(L)", "构件(N)", "绘图(D)", "修改(M)", "钢筋量(Q)", "视图(V)", "工具(T)", "云应用(Y)", "BIM应用(I)", "在线服务(S)", "帮助(H)", "版本号(B)"];

const STATUS: [string, string][] = [
  ["X=76887 Y=2479", "w-[148px]"],
  ["层高:2.8m", "w-[78px]"],
  ["底标高:14.75m", "w-[98px]"],
  ["0", "w-12"],
  ["按鼠标左键指定第一个角点，或拾取构件图元", "flex-1"],
  ["1180.4 FPS", "w-[70px]"],
];

export default function App() {
  return (
    <div className={`relative flex h-screen flex-col overflow-hidden bg-[#f0f0f0] text-[12px] leading-4 text-black ${UI}`}>
      <header className="flex h-[23px] shrink-0 items-center bg-white pl-[2px]">
        <Icon name="app" />
        <h1 className="ml-[5px] flex-1 whitespace-nowrap">
          广联达BIM钢筋算量软件{" "}
          <span className="font-['Roboto','Noto_Sans_CJK_SC',sans-serif] text-[13px]">
            GGJ2013 - [C:\Users\Administrator.PC-20141127NRHM\Desktop\<span className="text-[12px]">白龙村</span>-2016-08-25-13-27-07(2166<span className="text-[12px]">版</span>).GGJ12]
          </span>
        </h1>
        <div className="mr-[19px] flex gap-[35px]">
          <button type="button" aria-label="最小化"><svg viewBox="0 0 11 11" className="size-[11px]"><path d="M0 5.500h11" stroke="#000" /></svg></button>
          <button type="button" aria-label="还原"><svg viewBox="0 0 11 11" className="size-[11px]"><path d="M.5 2.500h8v8h-8zM2.500 2.500v-2h8v8h-2" fill="none" stroke="#000" /></svg></button>
          <button type="button" aria-label="关闭窗口"><svg viewBox="0 0 11 11" className="size-[11px]"><path d="m.5.500 10 10M10.500.500l-10 10" stroke="#000" /></svg></button>
        </div>
      </header>
      <div className="absolute -top-[27px] left-[492px] flex size-[46px] items-end justify-center rounded-full border border-[#d8f0dc] bg-linear-to-b from-[#7fe08e] to-[#35b44e] pb-[3px] font-bold text-white shadow-[0_2px_5px_rgba(0,0,0,0.55)]">
        73
      </div>

      <nav className="flex h-[30px] shrink-0 items-center pl-[7px]">
        <div className="flex w-[777px] shrink-0 items-center gap-[11px]">
          {MENUS.map((m) => <button key={m} type="button" className="whitespace-nowrap">{m}</button>)}
        </div>
        <Tool icon="newChange" label="新建变更" arrow="far" />
        <Tool icon="mascot" label="广小二" />
        <Panel className="ml-[3px] w-[187px] justify-center">
          <a href="#help" className="text-[#663300]">为什么筏板XY方向布置..</a>
        </Panel>
        <Panel className="ml-[2px] flex-1">
          <Tool icon="user" label="13907298339" arrow="far" />
          <button type="button" className="ml-2 whitespace-nowrap">造价豆:0</button>
          <button type="button" aria-label="消息" className="ml-2"><Icon name="bell" /></button>
          <span className="mr-1 ml-auto flex h-full"><More /></span>
        </Panel>
      </nav>

      <div className="flex h-[31px] shrink-0 gap-[2px] pb-[2px]">
        <Panel className="w-[151px] pl-px">
          <Tool icon="newFile" title="新建" />
          <Tool icon="open" title="打开" arrow="far" />
          <Tool icon="save" title="保存" />
          <Sep />
          <Tool icon="undo" title="撤销" arrow="far" />
          <span className="mr-[3px] ml-auto flex h-full"><More /></span>
        </Panel>
        <Panel className="w-[549px]">
          <Tool icon="define" label="定义" />
          <Tool icon="sum" label="汇总计算" />
          <Tool icon="cloud" label="云检查" />
          <Tool icon="flush" label="平齐板顶" />
          <Tool icon="binoc" label="查找图元" />
          <Tool icon="glasses" label="查看钢筋量" />
          <Tool icon="batch" label="批量选择" />
          <span className="mr-1 ml-auto flex h-full"><More /></span>
        </Panel>
        <Panel className="min-w-0 flex-1 pl-px">
          <Combo value="二维" name="视图" icon="rect" className="w-[61px]" />
          <Tool icon="cube" label="俯视" arrow="far" />
          <Tool icon="orbit" label="动态观察" />
          <Tool icon="local3d" label="局部三维" />
          <Sep />
          <Tool icon="full" label="全屏" />
          <Tool icon="zoom" label="缩放" arrow="far" />
          <Tool icon="pan" label="平移" arrow="far" />
          <Tool icon="screenRot" label="屏幕旋转" arrow="near" />
          <Sep />
          <Tool icon="floors" label="选择楼层" />
          <span className="mr-1 ml-auto flex h-full"><More /></span>
        </Panel>
      </div>

      <main className="flex min-h-0 flex-1">
        <Sidebar />
        <section className="ml-[3px] flex min-w-0 flex-1 flex-col">
          <div className="flex h-[27px] shrink-0 gap-px pb-px pl-px">
            <Panel className="pr-px">
              <Grip />
              <Tool icon="brush" label="删除" />
              <Sep />
              <Tool icon="copy" label="复制" />
              <Tool icon="mirror" label="镜像" />
              <Sep />
              <Tool icon="move" label="移动" />
              <Tool icon="rotate" label="旋转" />
              <Sep />
              <Tool icon="extend" label="延伸" off />
              <Tool icon="trim" label="修剪" off />
              <Sep />
              <Tool icon="split1" label="打断" off />
              <Tool icon="merge" label="合并" off />
              <Tool icon="divide" label="分割" off />
              <Sep />
              <Tool icon="align" label="对齐" arrow="near" />
              <Tool icon="offset" label="偏移" off />
              <Tool icon="stretch" label="拉伸" off />
              <Sep />
              <Tool icon="grip" label="设置夹点" off />
            </Panel>
          </div>
          <div className="flex h-7 shrink-0 gap-px pb-px pl-px">
            <Panel className="pr-[3px]">
              <Grip />
              <Combo value="第5层" name="楼层" className="w-[58px]" />
              <Combo value="柱" name="构件类型" className="w-[71px]" />
              <Combo value="框柱" name="构件类别" className="w-[71px]" />
              <Combo value="KZ-4" name="构件" className="w-[71px]" />
              <Sep />
              <Tool icon="props" label="属性" />
              <Tool icon="editBar" label="编辑钢筋" on />
              <Tool icon="list" label="构件列表" />
              <Tool icon="dropper" label="拾取构件" />
            </Panel>
            <Panel className="pr-px">
              <Grip />
              <Tool icon="twoPt" label="两点" />
              <Tool icon="parallel" label="平行" />
              <Tool icon="angle" label="点角" arrow="far" />
              <Tool icon="threePt" label="三点辅轴" arrow="far" />
              <Tool icon="brush" label="删除辅轴" />
              <Tool icon="dim" label="尺寸标注" arrow="far" />
            </Panel>
          </div>
          <div className="flex h-[27px] shrink-0 gap-[2px] pl-px">
            <Panel className="pr-px">
              <Grip />
              <Tool icon="cursor" label="选择" on arrow="far" />
              <Sep />
              <Tool icon="point" label="点" />
              <Tool icon="rotPt" label="旋转点" />
              <Sep />
              <Tool icon="smart" label="智能布置" arrow="near" />
              <Sep />
              <Tool icon="origLabel" label="原位标注" />
              <Tool icon="colTable" label="图元柱表" />
              <Tool icon="adjust" label="调整柱端头" />
              <Tool icon="wallCol" label="按墙位置绘制柱" arrow="far" />
              <Tool icon="autoCorner" label="自动判断边角柱" />
              <Tool icon="check" label="查改标注" arrow="far" />
            </Panel>
            <Panel className="w-[31px]"><Grip /></Panel>
          </div>

          <Canvas />

          <div className="flex h-[30px] shrink-0 gap-px pt-[2px] pb-[2px] pl-px">
            <Panel className="pr-[2px]">
              <Grip />
              <Tool icon="ortho" label="正交" />
              <Tool icon="snap" label="对象捕捉" on />
              <Tool icon="dyn" label="动态输入" on />
            </Panel>
            <Panel className="pr-px">
              <Grip />
              <Tool icon="cross" label="交点" />
              <Tool icon="perp" label="垂点" on />
              <Tool icon="mid" label="中点" on />
              <Tool icon="vertex" label="顶点" />
              <Tool icon="coord" label="坐标" />
            </Panel>
            <Panel className="pr-[6px] text-[#848484]">
              <Grip />
              <span className="ml-px flex text-black"><Combo value="不偏移" name="偏移方式" className="w-[58px]" /></span>
              <Sep />
              <span className="mr-1 ml-px">X=</span>
              <Spin value="0" name="X 偏移" className="w-[58px]" />
              <span className="mr-[6px] ml-px">mm</span>
              <span className="mr-1">Y=</span>
              <Spin value="0" name="Y 偏移" className="w-[58px]" />
              <span className="ml-px">mm</span>
              <Sep />
              <label className="flex items-center gap-2 text-black">
                <input type="checkbox" className="ml-[2px] size-[12px] appearance-none border border-[#a0a0a0] bg-[#f4f4f4]" />
                旋转
              </label>
              <span className="ml-1 flex"><Spin value="0.000" name="旋转角度" className="w-[68px]" /></span>
              <span className="ml-px">°</span>
            </Panel>
          </div>

          <div className="flex h-[203px] shrink-0">
            <div className="flex w-3 shrink-0 flex-col items-center pt-1">
              <button type="button" aria-label="关闭面板" className="size-[10px]">
                <svg viewBox="0 0 10 10" className="size-[10px]"><path d="M.5.500h9v9h-9z" fill="#e0b8b4" stroke="#4b2a3a" /><path d="m2 2 6 6M8 2 2 8" stroke="#2b2b3b" strokeWidth="1.400" /></svg>
              </button>
              <span className="mt-1 w-2 flex-1 bg-[radial-gradient(circle_at_1px_1px,#b4b4b4_1px,transparent_1px)] bg-[size:4px_5px]" />
            </div>
            <div className="flex min-w-0 flex-1 flex-col pt-1">
              <div className="flex h-[26px] shrink-0 items-center bg-linear-to-b from-[#fbfbfb] to-[#f1f1f1] pl-px">
                <Tool icon="first" title="首条" off />
                <Tool icon="prev" title="上一条" off />
                <Tool icon="next" title="下一条" off />
                <Tool icon="last" title="末条" off />
                <Sep />
                <Tool icon="up" title="上移" off />
                <Tool icon="down" title="下移" off />
                <Sep />
                <Tool icon="insert" label="插入" off />
                <Tool icon="remove" label="删除" off />
                <Tool icon="scale" label="缩尺配筋" off />
                <Tool icon="info" label="钢筋信息" off />
                <Tool icon="lib" label="钢筋图库" off />
                <Tool icon="other" label="其他" arrow="near" />
                <span className="ml-[2px] flex"><Tool label="关闭" /></span>
                <Sep />
                <span className="ml-[6px]">单构件钢筋总重(kg)：0</span>
              </div>
              <BarGrid />
            </div>
          </div>
        </section>
      </main>

      <div className="flex h-[22px] shrink-0 gap-[2px] pt-[2px]">
        {STATUS.map(([text, w]) => (
          <span key={text} className={`flex shrink-0 items-center border border-[#d2d2d2] bg-linear-to-b from-[#f3f3f3] to-[#fbfbfb] pl-px whitespace-pre ${w}`}>
            <span><Song>{text}</Song></span>
          </span>
        ))}
      </div>
      <Taskbar />
    </div>
  );
}
